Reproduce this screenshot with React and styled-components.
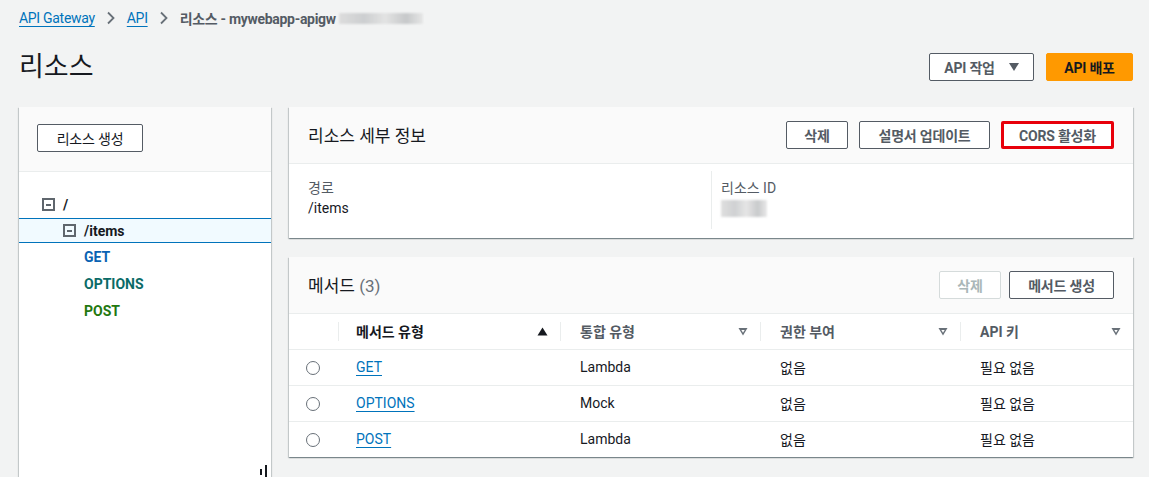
import React from "react";
import styled, { createGlobalStyle } from "styled-components";

const GlobalStyle = createGlobalStyle`
  html, body {
    margin: 0;
    padding: 0;
    background: #f2f3f3;
    font-family: Roboto, "Noto Sans CJK KR", sans-serif;
    font-size: 14px;
    color: #16191f;
  }
  #root {
    height: 477px;
    overflow: hidden;
  }
`;

const Page = styled.div`
  padding: 7px 16px 0 19px;
  height: 477px;
  box-sizing: border-box;
  display: flex;
  flex-direction: column;
`;

const Crumbs = styled.nav`
  display: flex;
  align-items: center;
  height: 22px;
  font-size: 14px;
  gap: 11px;
  color: #545b64;
  letter-spacing: -0.3px;
`;

const CrumbLink = styled.a`
  color: #0073bb;
  text-decoration: underline;
  text-underline-offset: 3px;
`;

const CrumbCurrent = styled.span`
  font-weight: 700;
  color: #545b64;
`;

const Blur = styled.span`
  display: inline-block;
  width: ${(p) => p.w}px;
  height: ${(p) => p.h}px;
  background: linear-gradient(90deg, #d8d8d8, #c4c6c8 30%, #e0e0e0 55%, #bcbec0 80%, #e4e4e4);
  filter: blur(1.2px);
  opacity: 0.8;
`;

const TitleRow = styled.div`
  display: flex;
  align-items: center;
  justify-content: space-between;
  height: 70px;
  margin-bottom: 8px;
`;

const Title = styled.h1`
  margin: 0;
  font-size: 27px;
  font-weight: 400;
  color: #16191f;
`;

const Actions = styled.div`
  display: flex;
  gap: ${(p) => p.gap || 12}px;
  padding-top: ${(p) => p.top || 0}px;
`;

const Button = styled.button`
  height: 28px;
  width: ${(p) => (p.w ? `${p.w}px` : "auto")};
  padding: 0;
  box-sizing: border-box;
  border: ${(p) =>
    p.primary
      ? "1px solid #ff9900"
      : p.disabled
      ? "1px solid #d5dbdb"
      : p.highlight
      ? "3px solid #e8000b"
      : "1px solid #545b64"};
  background: ${(p) => (p.primary ? "#ff9900" : "#fff")};
  color: ${(p) => (p.primary ? "#16191f" : p.disabled ? "#aab7b8" : p.plain ? "#16191f" : "#545b64")};
  font-family: inherit;
  font-size: 14px;
  font-weight: ${(p) => (p.plain ? 400 : 700)};
  letter-spacing: -0.2px;
  border-radius: 2px;
  display: inline-flex;
  align-items: center;
  justify-content: center;
  gap: 10px;
  cursor: pointer;
`;

const Caret = styled.span`
  width: 0;
  height: 0;
  border-left: 5px solid transparent;
  border-right: 5px solid transparent;
  border-top: 8px solid #545b64;
  margin-left: 4px;
`;

const Main = styled.div`
  flex: 1;
  display: flex;
  gap: 18px;
  min-height: 0;
`;

const Sidebar = styled.aside`
  width: 252px;
  background: #fff;
  box-shadow: 0 1px 1px 0 rgba(0, 28, 36, 0.3), 1px 1px 1px 0 rgba(0, 28, 36, 0.15),
    -1px 1px 1px 0 rgba(0, 28, 36, 0.15);
  display: flex;
  flex-direction: column;
  position: relative;
`;

const SideHead = styled.div`
  background: #fafafa;
  border-bottom: 1px solid #eaeded;
  height: 65px;
  box-sizing: border-box;
  padding: 17px 18px;
`;

const Tree = styled.div`
  padding-top: 20px;
  display: flex;
  flex-direction: column;
`;

const Node = styled.div`
  display: flex;
  align-items: center;
  height: ${(p) => (p.method ? 27 : 25)}px;
  padding-left: ${(p) => p.indent}px;
  box-sizing: border-box;
  gap: 8px;
  font-weight: 700;
  font-size: 14px;
  background: ${(p) => (p.selected ? "#f1faff" : "transparent")};
  border-top: 1px solid ${(p) => (p.selected ? "#0073bb" : "transparent")};
  border-bottom: 1px solid ${(p) => (p.selected ? "#0073bb" : "transparent")};
  color: ${(p) => p.color || "#16191f"};
  margin-top: ${(p) => (p.selected ? 1 : 0)}px;
`;

const Toggle = styled.span`
  width: 13px;
  height: 13px;
  border: 2px solid #5f666d;
  box-sizing: border-box;
  display: inline-flex;
  align-items: center;
  justify-content: center;
  &::after {
    content: "";
    width: 5px;
    height: 2px;
    background: #5f666d;
  }
`;

const Grip = styled.span`
  position: absolute;
  right: 4px;
  bottom: 0;
  width: 5px;
  height: 12px;
  border-right: 2px solid #16191f;
  &::before {
    content: "";
    position: absolute;
    left: 0;
    bottom: 2px;
    width: 2px;
    height: 6px;
    background: #16191f;
  }
`;

const Column = styled.div`
  flex: 1;
  display: flex;
  flex-direction: column;
  gap: 19px;
`;

const Panel = styled.section`
  background: #fff;
  box-shadow: 0 1px 1px 0 rgba(0, 28, 36, 0.3), 1px 1px 1px 0 rgba(0, 28, 36, 0.15),
    -1px 1px 1px 0 rgba(0, 28, 36, 0.15);
`;

const PanelHead = styled.div`
  background: #fafafa;
  border-bottom: 1px solid #eaeded;
  height: ${(p) => p.h}px;
  box-sizing: border-box;
  display: flex;
  align-items: center;
  justify-content: space-between;
  padding: 0 19px;
`;

const PanelTitle = styled.h2`
  margin: 0;
  font-size: 17px;
  font-weight: 400;
  color: #16191f;
  margin-top: -2px;
`;

const Count = styled.span`
  color: #687078;
`;

const Details = styled.div`
  display: grid;
  grid-template-columns: 1fr 1fr;
  padding: 7px 0 9px;
`;

const Field = styled.div`
  padding: 6px 19px 10px;
  border-left: ${(p) => (p.divider ? "1px solid #eaeded" : "none")};
  padding-left: ${(p) => (p.divider ? 9 : 19)}px;
  display: flex;
  flex-direction: column;
  gap: 3px;
  min-height: 42px;
`;

const Label = styled.span`
  color: #545b64;
`;

const Value = styled.span`
  color: #16191f;
`;

const Table = styled.table`
  width: 100%;
  border-collapse: collapse;
  table-layout: fixed;
  font-size: 14px;
`;

const Th = styled.th`
  text-align: left;
  font-weight: 700;
  color: ${(p) => (p.sorted ? "#16191f" : "#545b64")};
  height: 35px;
  box-sizing: border-box;
  padding: 0 12px 0 ${(p) => p.pl ?? 20}px;
  width: ${(p) => (p.w ? `${p.w}px` : "auto")};
  border-bottom: 1px solid #eaeded;
  position: relative;
  &::before {
    content: "";
    display: ${(p) => (p.first ? "none" : "block")};
    position: absolute;
    left: 0;
    top: 8px;
    bottom: 8px;
    border-left: 1px solid #eaeded;
  }
`;

const ThInner = styled.div`
  display: flex;
  align-items: center;
  justify-content: space-between;
`;

const Td = styled.td`
  height: 36px;
  box-sizing: border-box;
  padding: 0 12px 0 ${(p) => p.pl ?? 20}px;
  border-bottom: ${(p) => (p.last ? "none" : "1px solid #eaeded")};
  color: #16191f;
  white-space: nowrap;
`;

const Radio = styled.span`
  display: inline-block;
  width: 12px;
  height: 12px;
  border: 1px solid #687078;
  border-radius: 50%;
  vertical-align: middle;
`;

const MethodLink = styled.a`
  color: #0073bb;
  text-decoration: underline;
  text-underline-offset: 3px;
`;

const rows = [
  { name: "GET", integ: "Lambda" },
  { name: "OPTIONS", integ: "Mock" },
  { name: "POST", integ: "Lambda" },
];

const Chevron = () => (
  <svg width="10" height="14" viewBox="0 0 10 14">
    <path d="M2 1.5 L7.5 7 L2 12.5" fill="none" stroke="#687078" strokeWidth="1.8" />
  </svg>
);

const SortUp = () => (
  <svg width="11" height="9" viewBox="0 0 11 9">
    <path d="M5.5 0.5 L10.5 8.5 L0.5 8.5 Z" fill="#16191f" />
  </svg>
);

const SortDown = () => (
  <svg width="10" height="9" viewBox="0 0 10 9">
    <path d="M0.5 1 L9.5 1 L5 8.5 Z" fill="#687078" />
    <path d="M3.3 3 L6.7 3 L5 5.8 Z" fill="#fff" />
  </svg>
);

export default function App() {
  return (
    <>
      <GlobalStyle />
      <Page>
        <Crumbs>
          <CrumbLink>API Gateway</CrumbLink>
          <Chevron />
          <CrumbLink>API</CrumbLink>
          <Chevron />
          <CrumbCurrent>
            리소스 - mywebapp-apigw <Blur w={84} h={11} />
          </CrumbCurrent>
        </Crumbs>
        <TitleRow>
          <Title>리소스</Title>
          <Actions top={6}>
            <Button w={105}>
              API 작업 <Caret />
            </Button>
            <Button primary w={87}>
              API 배포
            </Button>
          </Actions>
        </TitleRow>
        <Main>
          <Sidebar>
            <SideHead>
              <Button w={106} plain>
                리소스 생성
              </Button>
            </SideHead>
            <Tree>
              <Node indent={23}>
                <Toggle /> /
              </Node>
              <Node indent={44} selected>
                <Toggle /> /items
              </Node>
              <Node indent={65} method color="#0b62b3">
                GET
              </Node>
              <Node indent={65} method color="#0a6b67">
                OPTIONS
              </Node>
              <Node indent={65} method color="#23780f">
                POST
              </Node>
            </Tree>
            <Grip />
          </Sidebar>
          <Column>
            <Panel>
              <PanelHead h={57}>
                <PanelTitle>리소스 세부 정보</PanelTitle>
                <Actions gap={11}>
                  <Button w={62}>삭제</Button>
                  <Button w={131}>설명서 업데이트</Button>
                  <Button w={113} highlight>
                    CORS 활성화
                  </Button>
                </Actions>
              </PanelHead>
              <Details>
                <Field>
                  <Label>경로</Label>
                  <Value>/items</Value>
                </Field>
                <Field divider>
                  <Label>리소스 ID</Label>
                  <Blur w={46} h={17} />
                </Field>
              </Details>
            </Panel>
            <Panel>
              <PanelHead h={57}>
                <PanelTitle>
                  메서드 <Count>(3)</Count>
                </PanelTitle>
                <Actions gap={8}>
                  <Button w={62} disabled>
                    삭제
                  </Button>
                  <Button w={105}>메서드 생성</Button>
                </Actions>
              </PanelHead>
              <Table>
                <thead>
                  <tr>
                    <Th first w={49} pl={0}></Th>
                    <Th w={222} pl={18} sorted>
                      <ThInner>
                        메서드 유형 <SortUp />
                      </ThInner>
                    </Th>
                    <Th w={200}>
                      <ThInner>
                        통합 유형 <SortDown />
                      </ThInner>
                    </Th>
                    <Th w={200}>
                      <ThInner>
                        권한 부여 <SortDown />
                      </ThInner>
                    </Th>
                    <Th>
                      <ThInner>
                        API 키 <SortDown />
                      </ThInner>
                    </Th>
                  </tr>
                </thead>
                <tbody>
                  {rows.map((r, i) => {
                    const last = i === rows.length - 1;
                    return (
                      <tr key={r.name}>
                        <Td pl={17} last={last}>
                          <Radio />
                        </Td>
                        <Td pl={18} last={last}>
                          <MethodLink>{r.name}</MethodLink>
                        </Td>
                        <Td last={last}>{r.integ}</Td>
                        <Td last={last}>없음</Td>
                        <Td last={last}>필요 없음</Td>
                      </tr>
                    );
                  })}
                </tbody>
              </Table>
            </Panel>
          </Column>
        </Main>
      </Page>
    </>
  );
}
